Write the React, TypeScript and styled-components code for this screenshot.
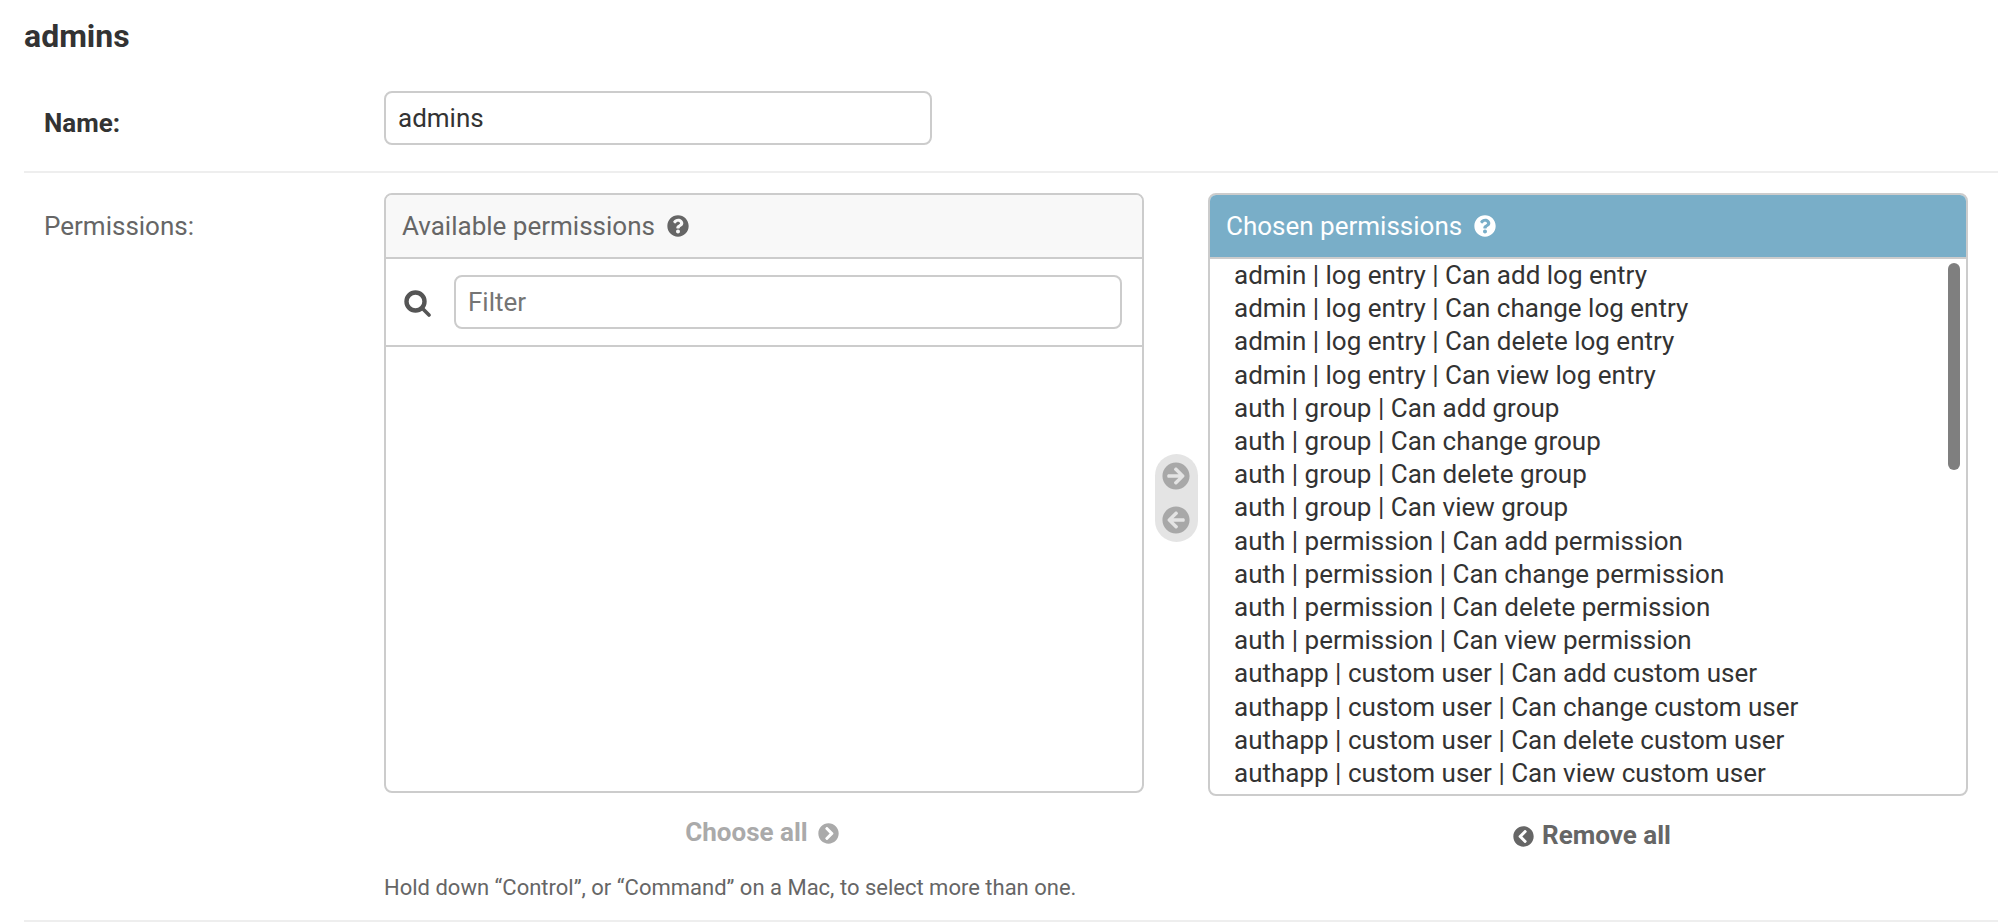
import { createGlobalStyle } from "styled-components";
import styled from "styled-components";
import { FaQuestionCircle, FaArrowCircleRight, FaArrowCircleLeft, FaChevronCircleRight, FaChevronCircleLeft } from "react-icons/fa";

const Global = createGlobalStyle`
  html, body { margin: 0; padding: 0; background: #fff; overflow: hidden; }
  body { font-family: Roboto, "Liberation Sans", sans-serif; color: #333; }
  * { box-sizing: border-box; }
`

const chosen = [
  "admin | log entry | Can add log entry",
  "admin | log entry | Can change log entry",
  "admin | log entry | Can delete log entry",
  "admin | log entry | Can view log entry",
  "auth | group | Can add group",
  "auth | group | Can change group",
  "auth | group | Can delete group",
  "auth | group | Can view group",
  "auth | permission | Can add permission",
  "auth | permission | Can change permission",
  "auth | permission | Can delete permission",
  "auth | permission | Can view permission",
  "authapp | custom user | Can add custom user",
  "authapp | custom user | Can change custom user",
  "authapp | custom user | Can delete custom user",
  "authapp | custom user | Can view custom user",
]

const Page = styled.div`
  width: 1998px;
  height: 922px;
  overflow: hidden;
  padding: 0 0 0 24px;
`
const Title = styled.h2`
  margin: 0;
  padding-top: 18px;
  height: 91px;
  font-size: 32px;
  line-height: 36px;
  font-weight: 700;
  color: #333;
`
const Row = styled.div`
  display: flex;
  padding-left: 20px;
  border-bottom: 2px solid #eee;
`
const NameRow = styled(Row)`
  height: 82px;
`
const PermRow = styled(Row)`
  padding-top: 20px;
  height: 749px;
`
const Label = styled.label<{ $strong?: boolean }>`
  width: 340px;
  flex: none;
  font-size: 26px;
  line-height: 30px;
  font-weight: ${(p) => (p.$strong ? 700 : 400)};
  color: ${(p) => (p.$strong ? "#333" : "#666")};
  padding-top: ${(p) => (p.$strong ? "17px" : "18px")};
`
const TextInput = styled.input`
  font: 400 26px Roboto, sans-serif;
  color: #333;
  border: 2px solid #ccc;
  border-radius: 8px;
  padding: 0 12px;
  outline: none;
  background: #fff;
  &::placeholder { color: #757575; opacity: 1; }
`
const NameInput = styled(TextInput)`
  width: 548px;
  height: 54px;
`
const Selector = styled.div`
  display: flex;
  flex-direction: column;
`
const Columns = styled.div`
  display: flex;
`
const Side = styled.div`
  width: 760px;
  display: flex;
  flex-direction: column;
  align-items: center;
`
const Panel = styled.div<{ $tall?: boolean }>`
  position: relative;
  width: 760px;
  height: ${(p) => (p.$tall ? "603px" : "600px")};
  border: 2px solid #ccc;
  border-radius: 8px;
  overflow: hidden;
  display: flex;
  flex-direction: column;
`
const PanelHead = styled.div<{ $active?: boolean }>`
  height: 64px;
  flex: none;
  display: flex;
  align-items: center;
  gap: 12px;
  padding-left: 16px;
  font-size: 26px;
  background: ${(p) => (p.$active ? "#79aec8" : "#f8f8f8")};
  color: ${(p) => (p.$active ? "#fff" : "#666")};
  border-bottom: 2px solid #ccc;
  svg { width: 22px; height: 22px; }
`
const FilterBar = styled.div`
  height: 88px;
  flex: none;
  display: flex;
  align-items: center;
  gap: 23px;
  padding: 0 20px 0 18px;
  border-bottom: 2px solid #ccc;
  color: #555;
`
const SearchIcon = styled.svg`
  width: 27px;
  height: 27px;
  flex: none;
  margin-top: 3px;
`
const FilterInput = styled(TextInput)`
  flex: 1;
  min-width: 0;
  height: 54px;
`
const List = styled.div`
  padding: 0 0 0 24px;
  font-size: 26px;
  line-height: 33.2px;
  color: #333;
  white-space: nowrap;
`
const Thumb = styled.div`
  position: absolute;
  top: 68px;
  right: 6px;
  width: 12px;
  height: 207px;
  border-radius: 6px;
  background: #7f7f7f;
`
const Mover = styled.div`
  width: 64px;
  flex: none;
  display: flex;
  align-items: center;
  justify-content: center;
`
const MoverPill = styled.div`
  width: 43px;
  height: 88px;
  margin-bottom: 48px;
  border-radius: 22px;
  background: #e4e4e4;
  display: flex;
  flex-direction: column;
  align-items: center;
  justify-content: center;
  gap: 16px;
  svg { width: 28px; height: 28px; color: #a8a8a8; }
`
const AllLink = styled.a<{ $off?: boolean }>`
  display: flex;
  align-items: center;
  gap: ${(p) => (p.$off ? "10px" : "8px")};
  margin-top: 23px;
  padding: ${(p) => (p.$off ? "0 4px 0 0" : "0 0 0 8px")};
  font-size: 26px;
  line-height: 32px;
  font-weight: 700;
  color: ${(p) => (p.$off ? "#aaa" : "#666")};
  svg { width: 21px; height: 21px; margin-top: 3px; }
`
const Help = styled.div`
  margin-top: 24px;
  font-size: 22px;
  line-height: 26px;
  color: #666;
`

export default function App() {
  return (
    <Page>
      <Global />
      <Title>admins</Title>
      <NameRow>
        <Label $strong>Name:</Label>
        <NameInput defaultValue="admins" />
      </NameRow>
      <PermRow>
        <Label>Permissions:</Label>
        <Selector>
          <Columns>
            <Side>
              <Panel>
                <PanelHead>Available permissions <FaQuestionCircle /></PanelHead>
                <FilterBar>
                  <SearchIcon viewBox="0 0 27 27" fill="none" stroke="currentColor">
                    <circle cx="11.5" cy="11.5" r="9" strokeWidth="4.4" />
                    <path d="M18 18l7 7" strokeWidth="3.6" strokeLinecap="round" />
                  </SearchIcon>
                  <FilterInput placeholder="Filter" />
                </FilterBar>
              </Panel>
              <AllLink $off>Choose all <FaChevronCircleRight /></AllLink>
            </Side>
            <Mover>
              <MoverPill>
                <FaArrowCircleRight />
                <FaArrowCircleLeft />
              </MoverPill>
            </Mover>
            <Side>
              <Panel $tall>
                <PanelHead $active>Chosen permissions <FaQuestionCircle /></PanelHead>
                <List>
                  {chosen.map((c) => <div key={c}>{c}</div>)}
                </List>
                <Thumb />
              </Panel>
              <AllLink><FaChevronCircleLeft /> Remove all</AllLink>
            </Side>
          </Columns>
          <Help>Hold down “Control”, or “Command” on a Mac, to select more than one.</Help>
        </Selector>
      </PermRow>
    </Page>
  )
}
